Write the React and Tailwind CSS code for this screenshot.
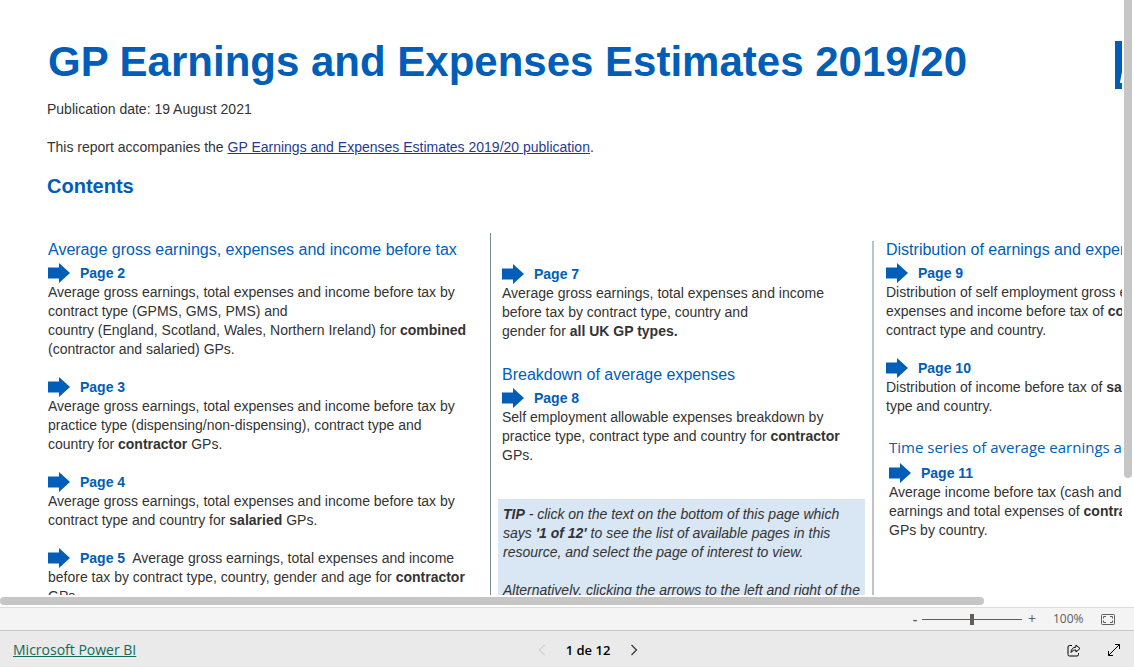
import { useState } from "react";

function Arrow() {
  return (
    <svg
      viewBox="0 0 22 20"
      className="inline-block w-[22px] h-5 -my-1 mr-[10px] align-[-1px]"
      fill="#005eb8"
      aria-hidden="true"
    >
      <path d="M0 4.500h11V0l11 10-11 10v-4.500H0z" />
    </svg>
  );
}

function PageLink({ page }) {
  return (
    <a href={`#page-${page}`} className="font-bold text-[#005eb8]">
      <Arrow />
      Page {page}
    </a>
  );
}

function Entry({ page, children }) {
  return (
    <div className="mb-[19px]">
      <div>
        <PageLink page={page} />
      </div>
      <p>{children}</p>
    </div>
  );
}

function SectionTitle({ children }) {
  return <h3 className="text-base leading-7 text-[#005eb8]">{children}</h3>;
}

function Report() {
  return (
    <main className="flex-1 min-w-0 overflow-hidden bg-white text-sm leading-[19px] text-[#333]">
      <div className="w-[1320px]">
        <header className="flex justify-between pl-12 pr-[76px] pt-9">
          <h1 className="text-[42px] leading-[52px] font-bold text-[#005eb8]">
            GP Earnings and Expenses Estimates 2019/20
          </h1>
          <div className="mt-[5px] w-[129px] h-12 pl-1 bg-[#005eb8] text-white text-[52px] leading-12 font-bold italic">
            NHS
          </div>
        </header>
        <div className="pl-[47px]">
          <p className="mt-[11px]">Publication date: 19 August 2021</p>
          <p className="mt-[19px]">
            This report accompanies the{" "}
            <a href="#publication" className="text-[#1f3a93] underline">
              GP Earnings and Expenses Estimates 2019/20 publication
            </a>
            .
          </p>
          <h2 className="mt-[15px] text-xl leading-7 font-bold text-[#005eb8]">Contents</h2>
        </div>

        <div className="flex mt-[33px] h-[480px] whitespace-nowrap">
          <section className="w-[490px] pl-12 pt-[3px]">
            <SectionTitle>Average gross earnings, expenses and income before tax</SectionTitle>
            <Entry page={2}>
              Average gross earnings, total expenses and income before tax by
              <br />
              contract type (GPMS, GMS, PMS) and
              <br />
              country (England, Scotland, Wales, Northern Ireland) for <b>combined</b>
              <br />
              (contractor and salaried) GPs.
            </Entry>
            <Entry page={3}>
              Average gross earnings, total expenses and income before tax by
              <br />
              practice type (dispensing/non-dispensing), contract type and
              <br />
              country for <b>contractor</b> GPs.
            </Entry>
            <Entry page={4}>
              Average gross earnings, total expenses and income before tax by
              <br />
              contract type and country for <b>salaried</b> GPs.
            </Entry>
            <p>
              <PageLink page={5} />
              &nbsp; Average gross earnings, total expenses and income
              <br />
              before tax by contract type, country, gender and age for <b>contractor</b>
              <br />
              GPs.
            </p>
          </section>

          <section className="w-[382px] pl-[11px] pt-8 border-l border-[#7c8b99]">
            <Entry page={7}>
              Average gross earnings, total expenses and income
              <br />
              before tax by contract type, country and
              <br />
              gender for <b>all UK GP types.</b>
            </Entry>
            <div className="pt-px">
              <SectionTitle>Breakdown of average expenses</SectionTitle>
              <Entry page={8}>
                Self employment allowable expenses breakdown by
                <br />
                practice type, contract type and country for <b>contractor</b>
                <br />
                GPs.
              </Entry>
            </div>
            <div className="-ml-1 mt-[34px] w-[367px] px-[5px] py-[6px] bg-[#d9e6f3] italic">
              <p>
                <b>TIP</b> - click on the text on the bottom of this page which
                <br />
                says <b>'1 of 12'</b> to see the list of available pages in this
                <br />
                resource, and select the page of interest to view.
              </p>
              <p className="mt-[19px]">
                Alternatively, clicking the arrows to the left and right of the
                <br />
                text moves between pages.
              </p>
            </div>
          </section>

          <section className="mt-2 pl-3 border-l-2 border-[#bcc4ca]">
            <div className="-mt-[5px]">
              <SectionTitle>Distribution of earnings and expenses</SectionTitle>
              <Entry page={9}>
                Distribution of self employment gross earnings, total
                <br />
                expenses and income before tax of <b>contractor</b> GPs by
                <br />
                contract type and country.
              </Entry>
              <Entry page={10}>
                Distribution of income before tax of <b>salaried</b> GPs by contract
                <br />
                type and country.
              </Entry>
            </div>
            <div className="pl-[3px]">
              <h3 className="mb-[5px] font-['Open_Sans',sans-serif] text-[15px] leading-6 text-[#005eb8]">
                Time series of average earnings and expenses
              </h3>
              <Entry page={11}>
                Average income before tax (cash and real terms), gross
                <br />
                earnings and total expenses of <b>contractor</b> and salaried
                <br />
                GPs by country.
              </Entry>
            </div>
          </section>
        </div>
      </div>
    </main>
  );
}

function ZoomBar() {
  const [zoom, setZoom] = useState(100);

  return (
    <div className="flex items-center justify-end h-[23px] pr-[19px] shrink-0 border-t border-[#dcdcdc] bg-[#f4f4f4] text-[#605e5c]">
      <button aria-label="Zoom out" className="w-[14px] text-sm leading-5 font-semibold text-center">
        -
      </button>
      <input
        type="range"
        aria-label="Zoom"
        min="0"
        max="200"
        value={zoom}
        onChange={(e) => setZoom(Number(e.target.value))}
        className="w-[100px] h-3 appearance-none bg-transparent [&::-webkit-slider-runnable-track]:h-px [&::-webkit-slider-runnable-track]:bg-[#605e5c] [&::-webkit-slider-thumb]:appearance-none [&::-webkit-slider-thumb]:-mt-[5px] [&::-webkit-slider-thumb]:w-1 [&::-webkit-slider-thumb]:h-[11px] [&::-webkit-slider-thumb]:bg-[#605e5c]"
      />
      <button aria-label="Zoom in" className="w-5 text-sm leading-5 text-center">
        +
      </button>
      <span className="w-10 ml-[11px] text-xs">{zoom}%</span>
      <button aria-label="Fit to page" className="ml-2">
        <svg viewBox="0 0 14 11" className="w-[14px] h-[11px]" fill="none" stroke="currentColor">
          <rect x="0.5" y="0.5" width="13" height="10" rx="1" />
          <path d="M2.500 4.500v-2H5M9 2.500h2.500v2M11.500 6.500v2H9M5 8.500H2.500v-2" />
        </svg>
      </button>
    </div>
  );
}

function Footer() {
  return (
    <footer className="grid grid-cols-3 items-center h-[37px] px-[13px] pt-[2px] shrink-0 border-t border-[#c8c8c8] bg-[#eaeaea] text-sm text-black">
      <div>
        <a href="#powerbi" className="text-[#0f6b5c] underline">
          Microsoft Power BI
        </a>
      </div>
      <nav className="flex items-center justify-center gap-5 pl-[42px]">
        <button aria-label="Previous page" disabled className="text-[#c0c0c0]">
          <svg viewBox="0 0 8 12" className="w-2 h-3" fill="none" stroke="currentColor">
            <path d="M6.500 1l-5 5 5 5" />
          </svg>
        </button>
        <button className="text-[13px] font-semibold">1 de 12</button>
        <button aria-label="Next page" className="text-[#333]">
          <svg viewBox="0 0 8 12" className="w-2 h-3" fill="none" stroke="currentColor" strokeWidth="1.2">
            <path d="M1.500 1l5 5-5 5" />
          </svg>
        </button>
      </nav>
      <div className="flex items-center justify-end gap-[26px]">
        <button aria-label="Share">
          <svg viewBox="0 0 14 13" className="w-[14px] h-[13px]" fill="none" stroke="currentColor">
            <path d="M5 1.500H2.500a1.500 1.500 0 0 0-1.500 1.500v7.500A1.500 1.500 0 0 0 2.500 12h7.500a1.500 1.500 0 0 0 1.500-1.500V9" />
            <path d="M9 1l4 3.500L9 8V6C7 6 5.500 6.500 4 8.500 4 5.500 6 3.200 9 3z" />
          </svg>
        </button>
        <button aria-label="Full screen">
          <svg viewBox="0 0 14 14" className="w-[14px] h-[14px]" fill="none" stroke="currentColor">
            <path d="M1.500 12.500l11-11M8 1.500h4.500V6M1.500 8v4.500H6" />
          </svg>
        </button>
      </div>
    </footer>
  );
}

export default function App() {
  return (
    <div className="flex flex-col h-screen overflow-hidden bg-white font-['Liberation_Sans',Arial,sans-serif]">
      <div className="flex flex-1 min-h-0">
        <Report />
        <div className="w-3 px-[2px]">
          <div className="h-[478px] rounded-b-full bg-[#c6c6c6]" />
        </div>
      </div>
      <div className="h-3 py-[2px] shrink-0">
        <div className="w-[984px] h-2 rounded-full bg-[#c6c6c6]" />
      </div>
      <div className="shrink-0 font-['Open_Sans',sans-serif]">
        <ZoomBar />
        <Footer />
      </div>
    </div>
  );
}
